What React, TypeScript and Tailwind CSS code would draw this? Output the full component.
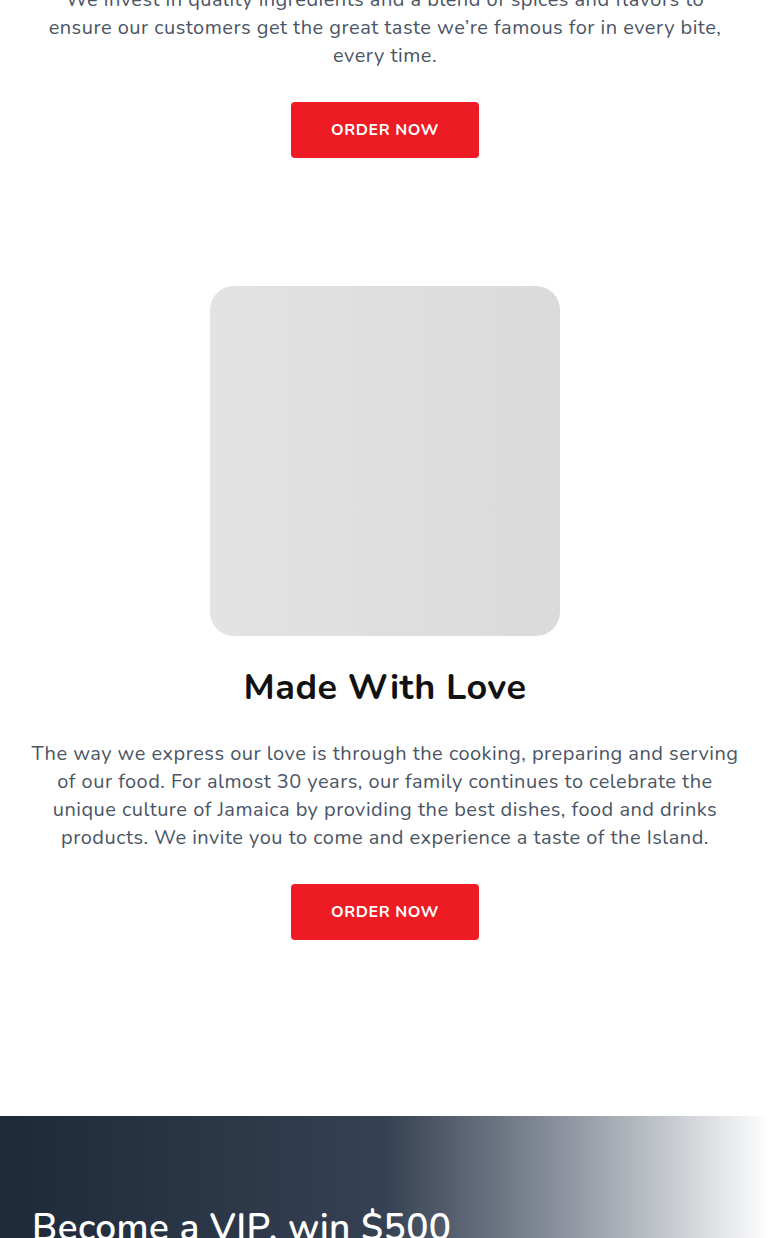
export default function App() {
  const font = { fontFamily: '"Nunito", "Noto Sans", sans-serif' };

  return (
    <div className="min-h-screen bg-white overflow-hidden" style={font}>
      {/* intro section (scrolled) */}
      <section className="px-6 flex flex-col items-center -mt-[14px]">
        <p className="text-[20px] leading-[28px] tracking-[0.48px] text-gray-600 text-center">
          We invest in quality ingredients and a blend of spices and flavors to
          <br />
          ensure our customers get the great taste we’re famous for in every bite,
          <br />
          every time.
        </p>
        <button className="mt-8 w-[188px] h-14 rounded bg-[#ed1c24] text-white text-base font-bold tracking-[0.6px]">
          ORDER NOW
        </button>
      </section>

      {/* made with love */}
      <section className="px-6 pt-32 flex flex-col items-center">
        <div className="w-[350px] h-[350px] rounded-3xl bg-gradient-to-r from-[#e3e3e3] to-[#dadada]" />
        <h2 className="mt-8 text-[36px] leading-10 font-bold tracking-[0.45px] text-[#111]">
          Made With Love
        </h2>
        <p className="mt-8 text-[20px] leading-[28px] tracking-[0.48px] text-gray-600 text-center">
          The way we express our love is through the cooking, preparing and serving
          <br />
          of our food. For almost 30 years, our family continues to celebrate the
          <br />
          unique culture of Jamaica by providing the best dishes, food and drinks
          <br />
          products. We invite you to come and experience a taste of the Island.
        </p>
        <button className="mt-8 w-[188px] h-14 rounded bg-[#ed1c24] text-white text-base font-bold tracking-[0.6px]">
          ORDER NOW
        </button>
      </section>

      {/* vip banner */}
      <section className="mt-[176px] bg-gradient-to-r from-gray-800 via-gray-700 to-white px-8 pt-[92px] pb-24">
        <h2 className="text-[37px] leading-10 font-semibold tracking-[0.4px] text-white">
          Become a VIP, win $500
        </h2>
      </section>
    </div>
  );
}
